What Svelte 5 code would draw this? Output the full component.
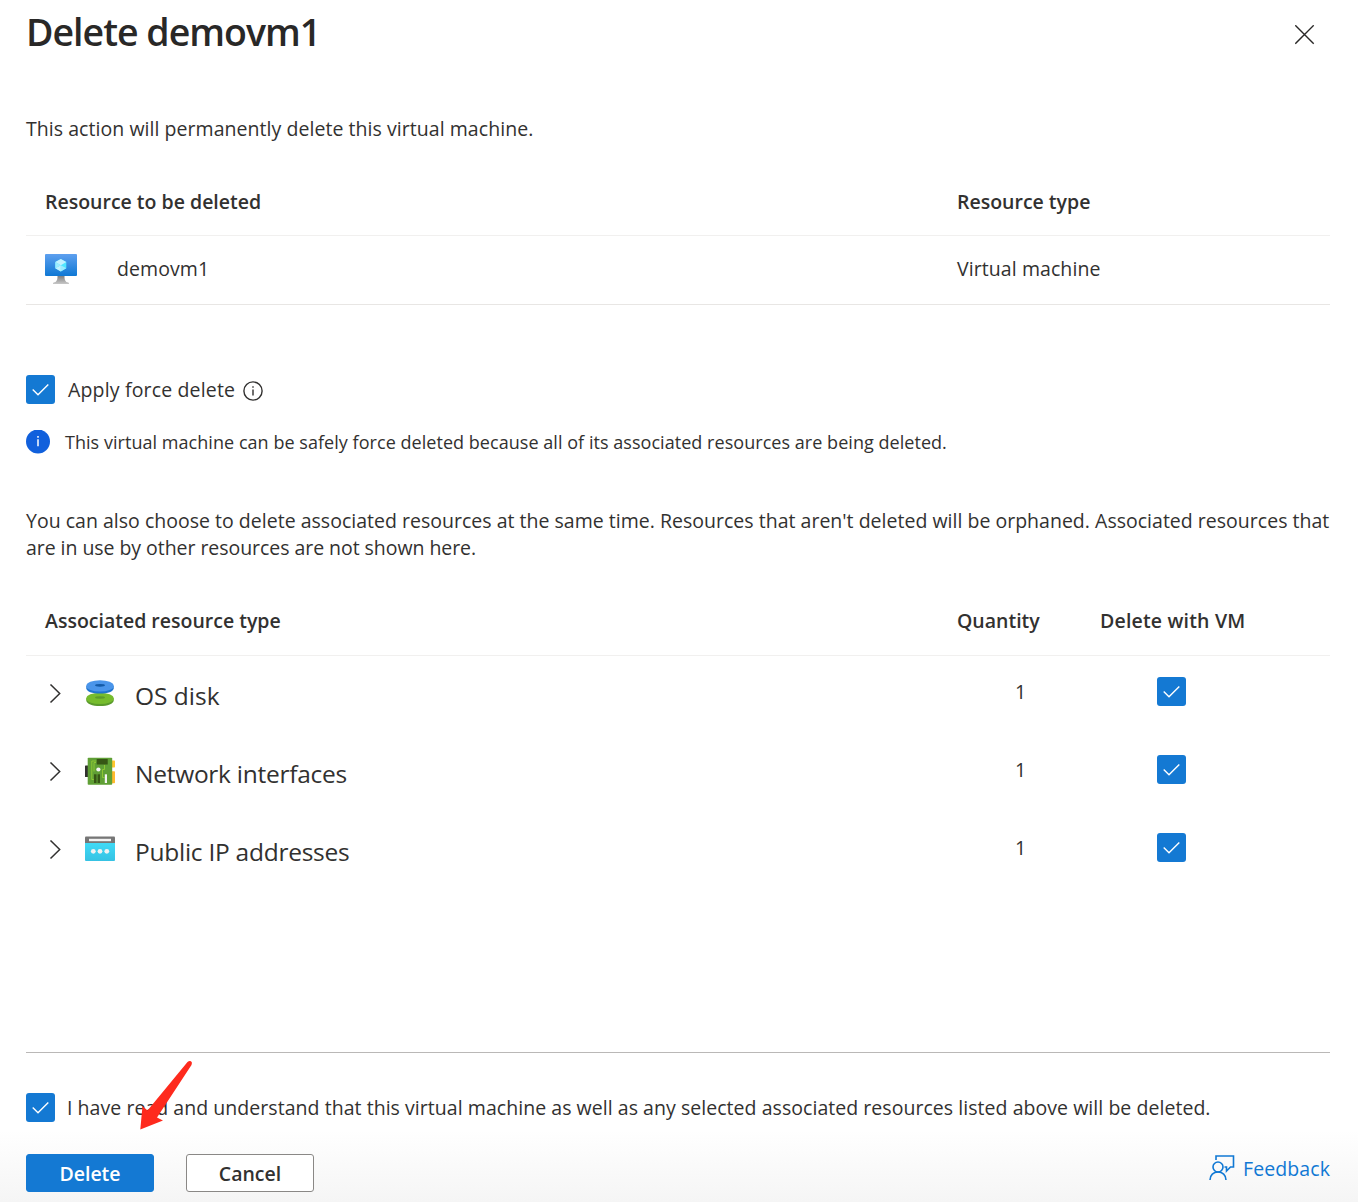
<script>
  let force = $state(true);
  let confirmed = $state(true);
  let resources = $state([
    { name: 'OS disk', kind: 'disk', quantity: 1, remove: true },
    { name: 'Network interfaces', kind: 'nic', quantity: 1, remove: true },
    { name: 'Public IP addresses', kind: 'ip', quantity: 1, remove: true }
  ]);
</script>

{#snippet check(on, toggle, label)}
  <button class="check" class:on role="checkbox" aria-checked={on} aria-label={label} onclick={toggle}>
    <svg width="29" height="29" viewBox="0 0 29 29"><path d="M6.700 14.500 12 19.700 22.300 9.400" fill="none" stroke="#fff" stroke-width="1.400" /></svg>
  </button>
{/snippet}

<main>
  <header>
    <h1>Delete demovm1</h1>
    <button class="close" aria-label="Close">
      <svg width="20" height="20" viewBox="0 0 20 20"><path d="M.3.300l18.400 18.400M18.700.3.300 18.700" stroke="#292827" stroke-width="1.400" /></svg>
    </button>
  </header>

  <p class="intro">This action will permanently delete this virtual machine.</p>

  <section class="target">
    <div class="row head">
      <span class="first">Resource to be deleted</span>
      <span>Resource type</span>
    </div>
    <div class="row item">
      <span class="vm">
        <svg width="32" height="31" viewBox="0 0 32 31">
          <defs>
            <linearGradient id="screen" x2="0" y2="1"><stop stop-color="#5ea0ef" /><stop offset="1" stop-color="#0f78d4" /></linearGradient>
            <linearGradient id="stand" x2="0" y2="1"><stop stop-color="#808080" /><stop offset="1" stop-color="#c8c8c8" /></linearGradient>
          </defs>
          <path d="M12.500 22h7c0 4 .9 6 3.700 6.600.7.300.8.700.8 1.400H8c0-.7.1-1.100.8-1.400C11.600 28 12.500 26 12.500 22z" fill="url(#stand)" />
          <rect width="32" height="22" rx="1" fill="url(#screen)" />
          <path d="M15.800 5 21.300 8v6.200l-5.500 3.300-5.500-3.300V8z" fill="#50e6ff" />
          <path d="M15.800 5 21.300 8l-5.500 3.200L10.300 8z" fill="#c3f1ff" />
          <path d="M10.300 14.200l5.500-3v6.300z" fill="#c3f1ff" />
          <path d="M10.300 8l5.500 3.200-5.500 3zM21.300 14.200l-5.500-3v6.300z" fill="#9cebff" />
        </svg>
        <span class="vmname">demovm1</span>
      </span>
      <span class="vmtype">Virtual machine</span>
    </div>
  </section>

  <div class="option">
    {@render check(force, () => (force = !force), 'Apply force delete')}
    <span class="force">Apply force delete</span>
    <svg width="20" height="20" viewBox="0 0 20 20"><circle cx="10" cy="10" r="9.100" fill="none" stroke="#323130" stroke-width="1.400" /><path d="M10 8.600v6M10 5.200v1.600" stroke="#323130" stroke-width="1.400" /></svg>
  </div>
  <div class="note">
    <svg width="24" height="24" viewBox="0 0 24 24"><circle cx="12" cy="11.500" r="12" fill="#1160dc" /><path d="M12 9.200v7M12 6v1.800" stroke="#fff" stroke-width="1.500" /></svg>
    <span>This virtual machine can be safely force deleted because all of its associated resources are being deleted.</span>
  </div>

  <p class="para"><span class="wide">You can also choose to delete associated resources at the same time. Resources that aren't deleted will be orphaned. Associated resources that</span><br /><span class="tight">are in use by other resources are not shown here.</span></p>

  <section class="assoc">
    <div class="row head tall">
      <span class="first">Associated resource type</span>
      <span class="second">Quantity</span>
      <span class="third">Delete with VM</span>
    </div>
    {#each resources as r}
      <div class="row res">
        <svg class="chev" width="14" height="20" viewBox="0 0 14 20"><path d="M1.500.500l9.200 9-9.200 9" fill="none" stroke="#323130" stroke-width="1.500" /></svg>
        <span class="icon">
          {#if r.kind === 'disk'}
            <svg width="30" height="30" viewBox="0 0 30 30">
              <path d="M1.300 20.200v2.500c.4 3 5.700 5.300 13.700 5.300s13.300-2.300 13.700-5.300v-2.500z" fill="#5a9a2c" />
              <ellipse cx="15" cy="20.400" rx="13.700" ry="5.700" fill="#76bc2d" />
              <ellipse cx="15" cy="19.500" rx="5" ry="1.200" fill="#5a9a2c" />
              <path d="M1.300 7.800v2.700c.4 3 5.700 5 13.700 5s13.300-2 13.700-5V7.800z" fill="#1f74cf" />
              <ellipse cx="15" cy="7.900" rx="13.700" ry="5.700" fill="#4a95ea" />
              <ellipse cx="15" cy="7.300" rx="5" ry="1.400" fill="#145ba8" />
            </svg>
          {:else if r.kind === 'nic'}
            <svg width="30" height="30" viewBox="0 0 30 30">
              <rect x="25" y="4.500" width="5" height="7" rx=".7" fill="#ffc62e" /><rect x="25" y="15.300" width="5" height="12" rx=".7" fill="#ffb92e" />
              <rect y="9.500" width="4" height="11.500" rx=".6" fill="#323130" />
              <rect x="2.700" y="1.700" width="24.500" height="27" rx=".8" fill="#5f9f35" />
              <path d="M11.500 5H6.800v18.500h2M11 6.500H9v9M19.500 9v4.500h-2v8h2" stroke="#92cc33" stroke-width=".9" fill="none" />
              <rect x="11.700" y="3" width="11" height="5.500" fill="#365615" />
              <rect x="9" y="18.300" width="2.500" height="8.700" fill="#365615" /><rect x="12.600" y="18.300" width="2.400" height="8.700" fill="#365615" />
              <circle cx="13.400" cy="13.500" r="2.100" fill="#f4f4f4" /><rect x="19.800" y="18.300" width="2.200" height="8.700" fill="#f4f4f4" />
            </svg>
          {:else}
            <svg width="30" height="30" viewBox="0 0 30 30">
              <defs><linearGradient id="web" x2="0" y2="1"><stop stop-color="#3fdaf6" /><stop offset="1" stop-color="#36c2e3" /></linearGradient></defs>
              <path d="M0 9h30v17q0 1-1 1H1q-1 0-1-1z" fill="url(#web)" />
              <path d="M1 2.500h28q1 0 1 1V9H0V3.500q0-1 1-1z" fill="#767676" />
              <rect x="4" y="4.800" width="22" height="2.400" fill="#f2f2f2" />
              <g fill="#f2f2f2"><circle cx="8.300" cy="17.300" r="2.400" /><circle cx="15" cy="17.300" r="2.400" /><circle cx="21.800" cy="17.300" r="2.400" /></g>
            </svg>
          {/if}
        </span>
        <span class="name {r.kind}">{r.name}</span>
        <span class="qty">{r.quantity}</span>
        {@render check(r.remove, () => (r.remove = !r.remove), `Delete ${r.name} with VM`)}
      </div>
    {/each}
  </section>

  <footer>
    <div class="confirm">
      {@render check(confirmed, () => (confirmed = !confirmed), 'Confirm deletion')}
      <span>I have read and understand that this virtual machine as well as any selected associated resources listed above will be deleted.</span>
    </div>
    <div class="actions">
      <button class="btn primary">Delete</button>
      <button class="btn">Cancel</button>
      <a class="feedback" href="#feedback">
        <svg width="26" height="26" viewBox="0 0 26 26"><g fill="none" stroke="#1078d4" stroke-width="1.600"><circle cx="9" cy="12" r="5" /><path d="M1 25c0-5 3.500-8 8-8s8 3 8 8M7 5V1h17.500v11h-3l-4 4v-4h-2" /></g></svg>
        <span>Feedback</span>
      </a>
    </div>
  </footer>

  <svg class="arrow" width="56" height="72" viewBox="0 0 56 72"><path d="M49.500 2Q51.300.5 53 1.300 54.700 2.500 53.500 5L19 57.500 25 60.500 2.300 69.500 4.500 46 9.500 50.500z" fill="#fe2a1d" /></svg>
</main>

<style>
  :global(body) { margin: 0; background: #fff; }
  main {
    position: relative;
    box-sizing: border-box;
    width: 1358px;
    height: 1202px;
    overflow: hidden;
    display: flex;
    flex-direction: column;
    font: 19.5px/27px 'Open Sans', sans-serif;
    color: #323130;
    background: linear-gradient(#fff 1130px, #f5f5f5 1202px);
    white-space: nowrap;
  }
  main > :not(.arrow) { margin-left: 26px; margin-right: 28px; }
  button { border: 0; padding: 0; background: none; font: inherit; color: inherit; }
  svg { display: block; flex: none; }
  p { margin: 0; }
  header { display: flex; justify-content: space-between; height: 115px; }
  h1 { margin: 5px 0 0; font-size: 37.5px; font-weight: 600; line-height: 54px; letter-spacing: -1px; color: #292827; }
  .close { align-self: flex-start; margin: 25px 15px 0 0; }
  .intro { letter-spacing: 0.05px; }
  .row { display: flex; align-items: center; box-sizing: border-box; }
  .target { margin-top: 26px; }
  .head { height: 68px; padding: 0 0 1px 19px; border-bottom: 1px solid #f1f0ef; font-weight: 600; }
  .first { width: 912px; }
  .third { letter-spacing: 0.18px; }
  .item { height: 69px; padding: 0 0 2px 19px; border-bottom: 1px solid #e8e6e4; }
  .vm { width: 912px; display: flex; align-items: center; }
  .vmname { margin-left: 40px; }
  .vmname, .vmtype { padding-bottom: 1px; letter-spacing: 0.08px; }
  .check { width: 29px; height: 29px; border-radius: 3px; background: #fff; flex: none; }
  .check.on { background: #1479d3; }
  .option { display: flex; align-items: center; margin-top: 70px; }
  .force { margin: 0 8px 0 13px; letter-spacing: 0.16px; }
  .option > svg { margin-top: 2px; }
  .note { display: flex; align-items: center; margin-top: 25px; font-size: 18px; }
  .note svg { margin-bottom: 2px; }
  .note span { margin-left: 15px; letter-spacing: 0.042px; }
  .para { margin-top: 51px; }
  .wide { letter-spacing: 0.015px; }
  .tight { letter-spacing: -0.05px; }
  .assoc { margin-top: 26px; height: 465px; }
  .tall { height: 69px; }
  .second { width: 143px; }
  .res { height: 78px; padding: 0 0 2px 23px; }
  .icon { margin: 0 0 2px 22px; }
  .name { width: 880px; margin-left: 20px; padding-top: 3px; font-size: 24.5px; line-height: 34px; }
  .nic, .ip { letter-spacing: -0.26px; }
  .qty { width: 142px; padding-bottom: 5px; }
  .res .check { margin-bottom: 5px; }
  footer { border-top: 1px solid #bab8b7; padding-top: 40px; }
  .confirm { display: flex; align-items: center; }
  .confirm span { margin-left: 12px; letter-spacing: 0.046px; }
  .actions { display: flex; align-items: center; margin-top: 32px; }
  .btn { box-sizing: border-box; width: 128px; height: 38px; border: 1px solid #8a8886; border-radius: 3px; background: #fff; font-weight: 600; }
  .primary { background: #1479d3; border-color: #1479d3; color: #fff; margin-right: 32px; }
  .feedback { display: flex; align-items: center; margin: 0 0 10px auto; color: #1078d4; text-decoration: none; }
  .feedback span { margin-left: 8px; letter-spacing: 0.08px; }
  .arrow { position: absolute; left: 138px; top: 1060px; }
</style>
